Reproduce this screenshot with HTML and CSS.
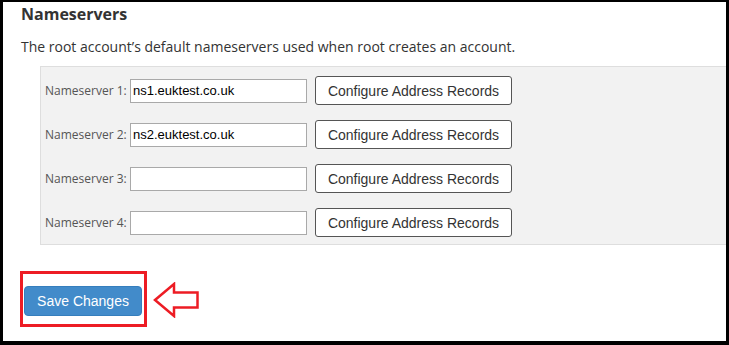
FILE: index.html
```html
<!DOCTYPE html>
<html lang="en">
<head>
    <meta charset="UTF-8">
    <title>Nameservers</title>
    <link rel="stylesheet" href="styles.css">
</head>
<body>
    <div class="frame">
        <h2 class="title">Nameservers</h2>
        <p class="desc">The root account’s default nameservers used when root creates an account.</p>

        <div class="panel">
            <div class="ns-row">
                <label class="ns-label" for="ns1">Nameserver 1:</label>
                <input class="ns-input" type="text" id="ns1" value="ns1.euktest.co.uk">
                <button class="btn-config" type="button">Configure Address Records</button>
            </div>
            <div class="ns-row">
                <label class="ns-label" for="ns2">Nameserver 2:</label>
                <input class="ns-input" type="text" id="ns2" value="ns2.euktest.co.uk">
                <button class="btn-config" type="button">Configure Address Records</button>
            </div>
            <div class="ns-row">
                <label class="ns-label" for="ns3">Nameserver 3:</label>
                <input class="ns-input" type="text" id="ns3" value="">
                <button class="btn-config" type="button">Configure Address Records</button>
            </div>
            <div class="ns-row">
                <label class="ns-label" for="ns4">Nameserver 4:</label>
                <input class="ns-input" type="text" id="ns4" value="">
                <button class="btn-config" type="button">Configure Address Records</button>
            </div>
        </div>

        <div class="save-row">
            <div class="highlight">
                <button class="btn-save" type="submit">Save Changes</button>
            </div>
            <svg class="arrow" width="46" height="36" viewBox="0 0 46 36">
                <path d="M2 18 L21 2 L21 10.5 L44.5 10.5 L44.5 25.5 L21 25.5 L21 34 Z"
                      fill="#fff" stroke="#ed1c24" stroke-width="2.5" stroke-linejoin="miter"/>
            </svg>
        </div>
    </div>
</body>
</html>
```

FILE: styles.css
```css
* {
    box-sizing: border-box;
}

body {
    margin: 0;
    background: #fff;
    font-family: 'Open Sans', sans-serif;
    color: #333;
}

.frame {
    height: 345px;
    border-style: solid;
    border-color: #000;
    border-width: 2px 3px 4px 3px;
    padding: 1px 0 0 18px;
}

.title {
    margin: 0;
    font-size: 16px;
    font-weight: 700;
    line-height: 22px;
    color: #333;
}

.desc {
    margin: 12px 0 0;
    font-size: 14px;
    line-height: 20px;
    color: #333;
}

.panel {
    margin: 9px 0 0 19px;
    background: #f2f2f2;
    border: 1px solid #dedede;
    border-right: none;
    padding: 9px 0 7px 4px;
    display: flex;
    flex-direction: column;
    gap: 15px;
}

.ns-row {
    display: flex;
    align-items: center;
    height: 29px;
}

.ns-label {
    width: 85px;
    font-size: 12px;
    color: #555;
}

.ns-input {
    width: 177px;
    height: 24px;
    margin: 0 8px 0 0;
    padding: 0 2px;
    border: 1px solid #a9a9a9;
    background: #fff;
    font-family: 'Liberation Sans', Arial, sans-serif;
    font-size: 13px;
    color: #000;
}

.btn-config {
    width: 197px;
    height: 29px;
    padding: 0;
    background: #fff;
    border: 1px solid #555;
    border-radius: 3px;
    font-family: 'Liberation Sans', Arial, sans-serif;
    font-size: 14px;
    color: #333;
}

.save-row {
    display: flex;
    align-items: center;
    gap: 6px;
    margin: 26px 0 0 -1px;
}

.highlight {
    width: 127px;
    height: 56px;
    border: 3px solid #ed1c24;
    padding: 12px 0 0 1px;
}

.btn-save {
    width: 118px;
    height: 30px;
    padding: 0;
    background: #428bca;
    border: 1px solid #357ebd;
    border-radius: 4px;
    font-family: 'Liberation Sans', Arial, sans-serif;
    font-size: 14px;
    color: #fff;
}

.arrow {
    display: block;
    margin-top: 2px;
}
```
